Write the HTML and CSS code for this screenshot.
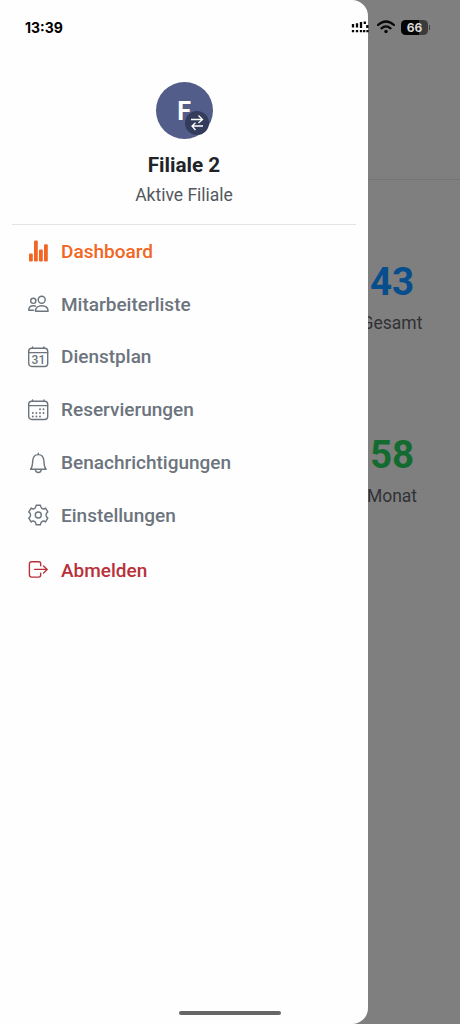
FILE: index.html
```html
<!DOCTYPE html>
<html lang="de">
<head>
<meta charset="utf-8">
<title>Dashboard</title>
<link rel="stylesheet" href="styles.css">
</head>
<body>
<div class="screen">
  <main class="page">
    <div class="page-header"></div>
    <section class="stat stat-total"><strong>43</strong><span>Gesamt</span></section>
    <section class="stat stat-month"><strong>58</strong><span>Monat</span></section>
  </main>
  <aside class="drawer">
    <header class="profile">
      <div class="avatar">F
        <span class="switch"><svg width="14" height="18" viewBox="0 0 14 18"><path d="M1 5.500h11M8.500 1.500l4 4-4 3.500M13 12H2M5.500 8.800L2 12l3.500 4"/></svg></span>
      </div>
      <h1>Filiale 2</h1>
      <p>Aktive Filiale</p>
    </header>
    <nav class="menu">
      <a class="item active"><svg viewBox="0 0 22 22"><g fill="currentColor" stroke="none"><rect x="1" y="13.500" width="3.800" height="8" rx="1"/><rect x="6" y="0.500" width="3.800" height="21" rx="1"/><rect x="11" y="9.500" width="3.800" height="12" rx="1"/><rect x="16" y="4.300" width="3.800" height="17.200" rx="1"/></g></svg><span>Dashboard</span></a>
      <a class="item"><svg viewBox="0 0 22 22"><circle cx="13.700" cy="6.800" r="3.500"/><path d="M7.500 18.200c0-3.700 2.800-5.500 6.300-5.500s6.300 1.800 6.300 5.500z"/><circle cx="5.300" cy="7.800" r="2.600"/><path d="M5.500 17.200H.7c0-2.900 1.700-4.500 4.600-4.500.9 0 1.600.2 2.300.5"/></svg><span>Mitarbeiterliste</span></a>
      <a class="item"><svg viewBox="0 0 22 22"><rect x="0.700" y="2.300" width="19" height="18.200" rx="3"/><path d="M.7 6.600h19M4.500 1v1.300M15.900 1v1.300"/><text x="10.400" y="18.200">31</text></svg><span>Dienstplan</span></a>
      <a class="item"><svg viewBox="0 0 22 22"><rect x="0.700" y="2.300" width="19" height="18.200" rx="3"/><path d="M.7 6.600h19M4.500 1v1.300M15.900 1v1.300"/><path class="dots" d="M12 10.300h0M15.500 10.300h0M4.800 14h0M8.400 14h0M12 14h0M15.500 14h0M4.800 17.500h0M8.400 17.500h0M12 17.500h0"/></svg><span>Reservierungen</span></a>
      <a class="item"><svg viewBox="0 0 22 22"><path d="M10.300 1.300v1.200M2.500 17.300c1.800-2 2-4 2.200-8.200.2-4 2.300-6.500 5.600-6.500s5.400 2.500 5.600 6.500c.2 4.200.4 6.200 2.200 8.200zM7.400 17.600a2.900 2.900 0 0 0 5.800 0"/></svg><span>Benachrichtigungen</span></a>
      <a class="item"><svg viewBox="0 0 22 22"><circle cx="10.300" cy="11" r="3"/><path d="M8.200 1.200h4.200q.4 2.300 1.200 2.900t1.600.9 2.300-.9l2.300 3.800q-1.800 1.300-1.800 3.100t1.800 3.100l-2.300 3.800q-1.500-1.200-2.300-.9t-1.600.9-1.200 2.900H8.200q-.4-2.300-1.200-2.900t-1.600-.9-2.300.9L.8 14.100Q2.600 12.800 2.600 11T.8 7.900l2.300-3.800q1.500 1.200 2.300.9T7 4.100t1.200-2.900z"/></svg><span>Einstellungen</span></a>
      <a class="item logout"><svg viewBox="0 0 22 22"><path d="M12.700 6.700V4.700a2 2 0 0 0-2-2H3.700a2.300 2.300 0 0 0-2.300 2.300v10.800a2.300 2.300 0 0 0 2.300 2.300h7a2 2 0 0 0 2-2v-2M6.700 10.400h12M15.500 6.900l3.700 3.500-3.700 3.500"/></svg><span>Abmelden</span></a>
    </nav>
  </aside>
  <div class="statusbar">
    <time>13:39</time>
    <div class="indicators">
      <svg class="signal" width="18" height="14" viewBox="0 0 18 14"><path d="M2 4v3.500M6 3.300v4.200M10 2v6M13.800 1.500v2.500M16.300 5v3M2 10v2.300M6 10v2.300M10 10v2.300M13.200 10v2.300M16.500 10v2.300"/></svg>
      <svg class="wifi" width="18" height="14" viewBox="0 0 18 14"><path d="M1 5Q9-2 17 5M4.500 8.300Q9 4.500 13.500 8.300"/><circle cx="9" cy="11.500" r="1.700"/></svg>
      <span class="battery">66</span>
    </div>
  </div>
  <div class="home-indicator"></div>
</div>
</body>
</html>
```
FILE: styles.css
```css
* { box-sizing: border-box; }
body { margin: 0; font-family: Roboto, sans-serif; }
.screen { position: relative; width: 460px; height: 1024px; overflow: hidden; background: #7f7f7f; }
.page { padding-left: 323px; }
.page-header { height: 180px; margin-left: -323px; border-bottom: 1px solid #747474; }
.stat { display: flex; flex-direction: column; align-items: center; width: 138px; height: 173px; padding-top: 78px; }
.stat strong { font-size: 38.500px; line-height: 48px; font-weight: 700; }
.stat span { margin-top: 6px; font-size: 17.500px; line-height: 22px; color: #303236; }
.stat-total strong { color: #084d8c; }
.stat-month strong { color: #146b30; }
.drawer { position: absolute; inset: 0 auto 0 0; width: 368px; padding: 82px 12px 0; background: #fefefe; border-radius: 0 16px 16px 0; }
.profile { display: flex; flex-direction: column; align-items: center; height: 143px; border-bottom: 1px solid #e2e4e7; }
.avatar { position: relative; width: 57px; height: 57px; border-radius: 50%; background: #525e89; color: #fff; font-size: 25px; line-height: 59px; font-weight: 700; text-align: center; }
.switch { position: absolute; right: 4px; bottom: 4px; display: flex; align-items: center; justify-content: center; width: 24px; height: 24px; border-radius: 50%; background: #343c5b; }
.switch svg { fill: none; stroke: #fff; stroke-width: 1.300; }
.profile h1 { margin: 13px 0 0; font-size: 20.700px; line-height: 26px; font-weight: 700; color: #202429; }
.profile p { margin: 6px 0 0; font-size: 17.500px; line-height: 22px; color: #54575c; }
.menu { display: flex; flex-direction: column; }
.item { display: flex; align-items: center; gap: 11px; height: 52.800px; padding-left: 16px; color: #6c747d; font-size: 19px; font-weight: 500; }
.item svg { width: 22px; height: 22px; fill: none; stroke: currentColor; stroke-width: 1.400; stroke-linejoin: round; stroke-linecap: round; }
.item text { fill: currentColor; stroke: none; font-size: 12px; text-anchor: middle; }
.item .dots { stroke-width: 1.900; }
.active { color: #f26522; }
.logout { margin-top: 2px; color: #b8313a; }
.statusbar { position: absolute; inset: 0 0 auto; display: flex; align-items: center; justify-content: space-between; height: 54px; padding: 0 29px 0 25px; color: #000; }
.statusbar time { font: 700 14px Inter, sans-serif; }
.indicators { display: flex; align-items: center; gap: 7px; }
.signal, .wifi { fill: none; stroke: #080808; stroke-width: 2.300; }
.wifi { stroke-linecap: round; }
.wifi circle { fill: #080808; stroke: none; }
.battery { position: relative; width: 27px; height: 15px; border-radius: 4.500px; background: linear-gradient(90deg, #050505 66%, #3b3b3b 66%); color: #d8d8d8; font: 700 12px/15px Inter, sans-serif; text-align: center; margin-right: 3px; margin-left: -1px; }
.signal { margin-right: 1px; margin-left: -1px; }
.battery::after { content: ""; position: absolute; right: -2px; top: 5px; width: 1px; height: 5px; background: #414141; }
.home-indicator { position: absolute; left: 179px; bottom: 9px; width: 102px; height: 4px; border-radius: 2px; background: #666; }
```
